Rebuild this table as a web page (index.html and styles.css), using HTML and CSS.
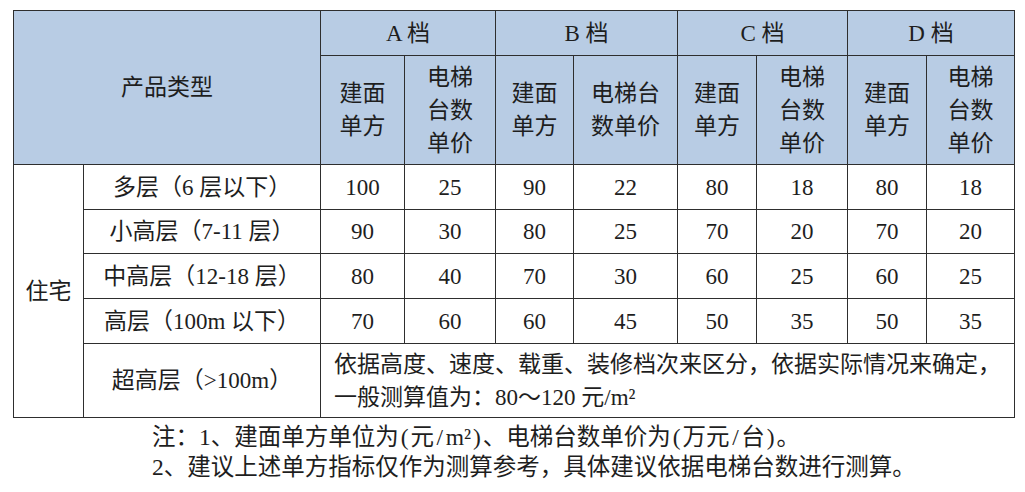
FILE: index.html
```html
<!DOCTYPE html>
<html lang="zh">
<head>
<meta charset="utf-8">
<link rel="stylesheet" href="styles.css">
</head>
<body>
<div class="page">
  <table class="grid">
    <colgroup>
      <col class="c-a"><col class="c-b">
      <col class="c1"><col class="c2"><col class="c3"><col class="c4">
      <col class="c5"><col class="c6"><col class="c7"><col class="c8">
    </colgroup>
    <thead>
      <tr class="r-top">
        <th colspan="2" rowspan="2">产品类型</th>
        <th colspan="2">A 档</th>
        <th colspan="2">B 档</th>
        <th colspan="2">C 档</th>
        <th colspan="2">D 档</th>
      </tr>
      <tr class="r-sub">
        <th>建面<br>单方</th>
        <th>电梯<br>台数<br>单价</th>
        <th>建面<br>单方</th>
        <th>电梯台<br>数单价</th>
        <th>建面<br>单方</th>
        <th>电梯<br>台数<br>单价</th>
        <th>建面<br>单方</th>
        <th>电梯<br>台数<br>单价</th>
      </tr>
    </thead>
    <tbody>
      <tr class="r-data">
        <td rowspan="5">住宅</td>
        <td>多层（6 层以下）</td>
        <td>100</td><td>25</td><td>90</td><td>22</td><td>80</td><td>18</td><td>80</td><td>18</td>
      </tr>
      <tr class="r-data r-short">
        <td>小高层（7-11 层）</td>
        <td>90</td><td>30</td><td>80</td><td>25</td><td>70</td><td>20</td><td>70</td><td>20</td>
      </tr>
      <tr class="r-data">
        <td>中高层（12-18 层）</td>
        <td>80</td><td>40</td><td>70</td><td>30</td><td>60</td><td>25</td><td>60</td><td>25</td>
      </tr>
      <tr class="r-data">
        <td>高层（100m 以下）</td>
        <td>70</td><td>60</td><td>60</td><td>45</td><td>50</td><td>35</td><td>50</td><td>35</td>
      </tr>
      <tr class="r-last">
        <td>超高层（&gt;100m）</td>
        <td colspan="8" class="desc">依据高度、速度、载重、装修档次来区分，依据实际情况来确定，<br>一般测算值为：80～120 元/m²</td>
      </tr>
    </tbody>
  </table>
  <div class="notes">
    <p>注：1、建面单方单位为<span class="hw">(</span>元<span class="hw">/</span>m²<span class="hw">)</span>、电梯台数单价为<span class="hw">(</span>万元<span class="hw">/</span>台<span class="hw">)</span>。</p>
    <p>2、建议上述单方指标仅作为测算参考，具体建议依据电梯台数进行测算。</p>
  </div>
</div>
</body>
</html>
```

FILE: styles.css
```css
html, body {
  margin: 0;
  padding: 0;
  background: #ffffff;
}

body {
  font-family: "Liberation Serif", "Noto Sans CJK SC", serif;
  font-size: 23px;
  color: #1e1e1e;
}

.page {
  padding: 10px 0 0 13px;
}

.grid {
  border-collapse: collapse;
  table-layout: fixed;
  width: 1002px;
}

.c-a { width: 70px; }
.c-b { width: 237px; }
.c1 { width: 84px; }
.c2 { width: 91px; }
.c3 { width: 78px; }
.c4 { width: 104px; }
.c5 { width: 79px; }
.c6 { width: 91px; }
.c7 { width: 79px; }
.c8 { width: 88px; }

.grid th,
.grid td {
  border: 1px solid #2e2e2e;
  padding: 0;
  text-align: center;
  vertical-align: middle;
  font-weight: normal;
  line-height: 33px;
}

.grid thead th {
  background: #b8cce4;
}

.r-top { height: 45px; }
.r-sub { height: 109px; }
.r-data { height: 45px; }
.r-short { height: 44px; }
.r-last { height: 74px; }

.grid td.desc {
  text-align: left;
  padding-left: 13px;
}

.notes {
  margin: 4px 0 0 139px;
  font-size: 23.5px;
}

.notes p {
  margin: 0;
  line-height: 30px;
}

.hw {
  display: inline-block;
  width: 0.5em;
  text-align: center;
}
```
